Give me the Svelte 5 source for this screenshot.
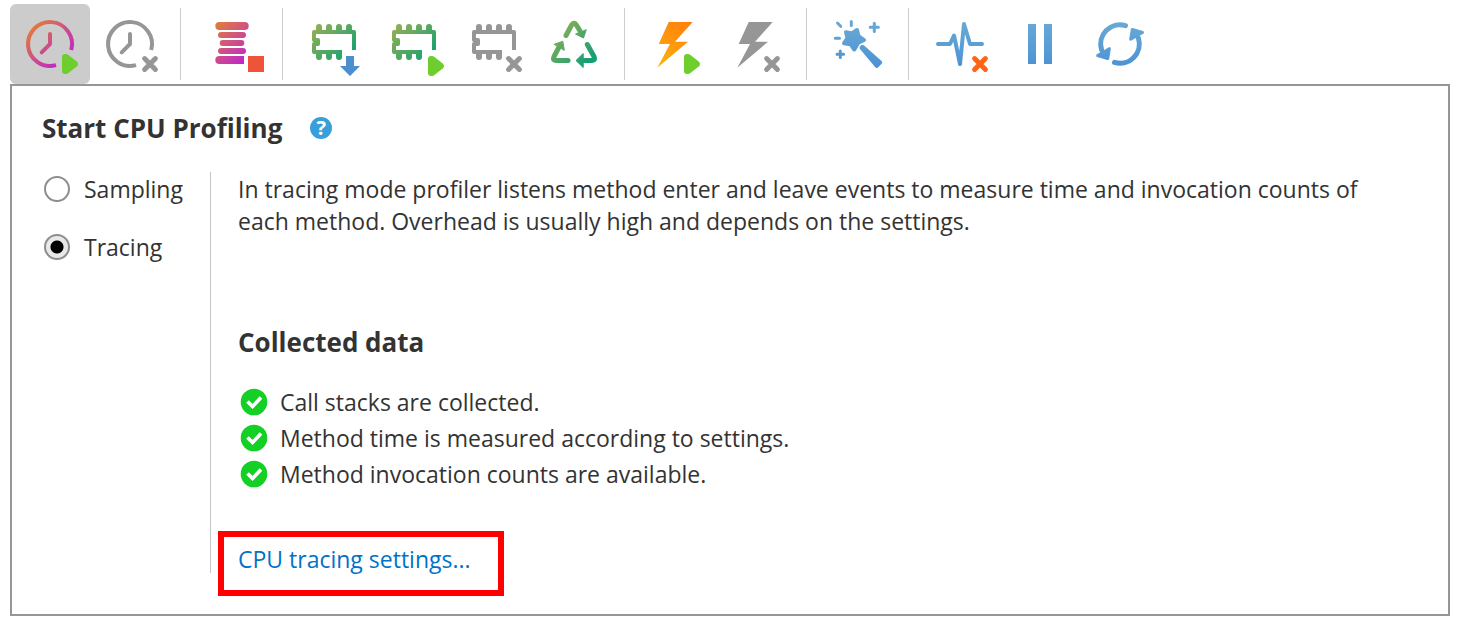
<script lang="ts">
	type Tool = { id: string; label: string; badge?: 'play' | 'cross'; bx?: number; by?: number };

	const groups: Tool[][] = [
		[
			{ id: 'clock', label: 'Start CPU profiling', badge: 'play', bx: 52, by: 50 },
			{ id: 'clock-off', label: 'Stop CPU profiling', badge: 'cross', bx: 60, by: 60 }
		],
		[{ id: 'spool', label: 'Thread profiling' }],
		[
			{ id: 'chip-save', label: 'Capture memory snapshot' },
			{ id: 'chip', label: 'Start allocation recording', badge: 'play', bx: 54, by: 52 },
			{ id: 'chip-off', label: 'Stop allocation recording', badge: 'cross', bx: 60, by: 60 },
			{ id: 'recycle', label: 'Force garbage collection' }
		],
		[
			{ id: 'bolt', label: 'Start exception profiling', badge: 'play', bx: 48, by: 50 },
			{ id: 'bolt-off', label: 'Stop exception profiling', badge: 'cross', bx: 56, by: 60 }
		],
		[{ id: 'wand', label: 'Inspections' }],
		[
			{ id: 'pulse', label: 'Clear telemetry', badge: 'cross', bx: 60, by: 60 },
			{ id: 'pause', label: 'Pause' },
			{ id: 'refresh', label: 'Refresh' }
		]
	];

	const collected = [
		'Call stacks are collected.',
		'Method time is measured according to settings.',
		'Method invocation counts are available.'
	];

	let active = $state('clock');
	let mode = $state('tracing');

	function ink(id: string) {
		if (id.endsWith('-off')) return '#969696';
		if (id === 'clock' || id === 'spool') return 'url(#warm)';
		if (id.startsWith('chip') || id === 'recycle') return 'url(#green)';
		if (id === 'bolt') return 'url(#fire)';
		return 'url(#blue)';
	}
</script>

<svg class="defs" width="0" height="0" aria-hidden="true">
	<defs>
		<linearGradient id="warm" gradientUnits="userSpaceOnUse" x1="22" y1="22" x2="56" y2="58">
			<stop offset="0" stop-color="#e07c3c" />
			<stop offset="1" stop-color="#bd22d2" />
		</linearGradient>
		<linearGradient id="green" gradientUnits="userSpaceOnUse" x1="20" y1="20" x2="56" y2="56">
			<stop offset="0" stop-color="#97b052" />
			<stop offset="1" stop-color="#149f74" />
		</linearGradient>
		<linearGradient id="fire" gradientUnits="userSpaceOnUse" x1="50" y1="18" x2="24" y2="60">
			<stop offset="0" stop-color="#ff7f0c" />
			<stop offset="1" stop-color="#ffb00d" />
		</linearGradient>
		<linearGradient id="blue" gradientUnits="userSpaceOnUse" x1="0" y1="18" x2="0" y2="62">
			<stop offset="0" stop-color="#68aad4" />
			<stop offset="1" stop-color="#4c93d6" />
		</linearGradient>
	</defs>
</svg>

{#snippet icon(tool: Tool)}
	{@const color = ink(tool.id)}
	<svg viewBox="0 0 80 80" fill="none" aria-hidden="true">
		{#if tool.id.startsWith('clock')}
			<g stroke={color} stroke-width="4">
				<path d="M61.2 46A22 22 0 1 0 46 61.2" />
				<path d="M40 30V40L31.7 48.3" stroke-linecap="round" stroke-linejoin="round" />
			</g>
		{:else if tool.id === 'spool'}
			<g fill={color}>
				<rect x="23.3" y="18" width="33.4" height="8" rx="4" />
				<rect x="26" y="28" width="28" height="6" rx="3" />
				<rect x="27.7" y="36" width="24.6" height="6" rx="3" />
				<rect x="26" y="44" width="28" height="6" rx="3" />
				<path d="M27.3 52H52V60H27.3A4 4 0 0 1 27.3 52Z" />
			</g>
			<rect x="56" y="52" width="16" height="16" fill="#ec5539" />
		{:else if tool.id.startsWith('chip')}
			<g stroke={color} stroke-linejoin="round">
				<path d="M60 46V28H20V36H24V40H20V48H48" stroke-width="4" />
				<path
					d="M25 27V23M35 27V23M45 27V23M55 27V23M25 49V53M35 49V53M45 49V53"
					stroke-width="6"
					stroke-linecap="round"
				/>
			</g>
			{#if tool.id === 'chip-save'}
				<path d="M52 52H60V62H66L56 72L46 62H52Z" fill="#4a8fd0" />
			{/if}
		{:else if tool.id === 'recycle'}
			<g stroke={color} stroke-width="5" stroke-linecap="round" stroke-linejoin="round">
				<path d="M32 31.5L37.3 21.5Q40 17 42.7 21.5L46 27" />
				<path d="M53.3 40.5L60 52.5Q62 56.5 58 56.5H49" />
				<path d="M34 56.5H22Q18 56.5 20 52.5L24.5 44" />
			</g>
			<g fill={color} stroke={color} stroke-linejoin="round">
				<path d="M52.3 25.7L49.5 34L41.5 30Z" />
				<path d="M42 56.5L49.2 49.5V63.5Z" />
				<path d="M20 40.3L28.8 37.3L30.3 46.3Z" />
			</g>
		{:else if tool.id.startsWith('bolt')}
			<path d="M32.7 18H56.7L39 37.8H52L21.3 63.7L34 40H22.7Z" fill={color} />
		{:else if tool.id === 'wand'}
			<g stroke={color} stroke-linecap="round" stroke-linejoin="round">
				<path
					d="M39 26L40.5 32L46 36L40.3 38.7L36.3 45.5L32.7 40.3L26 39.3L29.5 34L28 28.3L34 29.5Z"
					fill={color}
					stroke-width="4"
				/>
				<path d="M44 43L43.5 43.8L58.8 62L62.2 58.4L44.8 43Z" fill={color} stroke-width="4" />
				<path
					d="M19.5 19L22.7 22.3M33.3 17.5V21.5M17.3 34.3H21.5M56.3 19.2V27.4M52.2 23.3H60.4M22.3 47V53.6M19 50.3H25.6"
					stroke-width="3"
				/>
			</g>
		{:else if tool.id === 'pulse'}
			<path
				d="M18 40H30L34 31.5L40 60L44 20L50 40H62"
				stroke={color}
				stroke-width="4"
				stroke-linecap="round"
				stroke-linejoin="round"
			/>
		{:else if tool.id === 'pause'}
			<path d="M28 20H36V60H28ZM44 20H52V60H44Z" fill={color} />
		{:else if tool.id === 'refresh'}
			<g stroke={color} stroke-width="5" stroke-linecap="round">
				<path d="M45.5 21.6A19.3 19.3 0 0 0 21.6 46" />
				<path d="M34.5 58.4A19.3 19.3 0 0 0 58.4 34" />
			</g>
			<g fill={color} stroke={color} stroke-width="3" stroke-linejoin="round">
				<path d="M52.3 25.5L62.5 28.5L50.7 35.3Z" />
				<path d="M17.7 51.6L29.3 44.7L27.7 54.5Z" />
			</g>
		{/if}

		{#if tool.badge === 'play'}
			<g transform="translate({tool.bx} {tool.by})">
				<path d="M0 3Q0 0 3 0H4.5L6.2 .8L15 7.7Q17 10 15 12.3L6.2 19.2L4.5 20H3Q0 20 0 17Z" fill="#6dce2e" />
			</g>
		{:else if tool.badge === 'cross'}
			<g transform="translate({tool.bx} {tool.by})">
				<path
					d="M-5.4 -5.4L5.4 5.4M5.4 -5.4L-5.4 5.4"
					stroke={tool.id === 'pulse' ? '#ff6414' : '#969696'}
					stroke-width="5"
					stroke-linecap="round"
				/>
			</g>
		{/if}
	</svg>
{/snippet}

<div class="profiler">
	<div class="toolbar" role="toolbar" aria-label="Profiler">
		{#each groups as group, i (i)}
			<div class="group">
				{#each group as tool (tool.id)}
					<button
						type="button"
						class:active={active === tool.id}
						aria-label={tool.label}
						onclick={() => (active = tool.id)}
					>
						{@render icon(tool)}
					</button>
				{/each}
			</div>
		{/each}
	</div>

	<main class="panel">
		<header>
			<h1>Start CPU Profiling</h1>
			<button type="button" class="help" aria-label="Help">?</button>
		</header>

		<div class="body">
			<div class="modes" role="radiogroup" aria-label="Profiling mode">
				<label><input type="radio" name="mode" value="sampling" bind:group={mode} />Sampling</label>
				<label><input type="radio" name="mode" value="tracing" bind:group={mode} />Tracing</label>
			</div>

			<section class="details">
				<p>
					In tracing mode profiler listens method enter and leave events to measure time and
					invocation counts of each method. Overhead is usually high and depends on the settings.
				</p>
				<h2>Collected data</h2>
				<ul>
					{#each collected as item (item)}
						<li>
							<svg viewBox="0 0 28 28" width="28" height="28" aria-hidden="true">
								<circle cx="14" cy="14" r="13.3" fill="#14d024" />
								<path d="M7.5 13.5L12.5 18.5L21 9.5" fill="none" stroke="#fff" stroke-width="3.6" />
							</svg>
							{item}
						</li>
					{/each}
				</ul>
				<a href="#settings">CPU tracing settings...</a>
			</section>
		</div>
	</main>
</div>

<style>
	:global(body) {
		background: #fff;
	}

	.defs {
		position: absolute;
	}

	.profiler {
		padding: 4px 10px;
		color: #333;
		font: 23px/32px 'Open Sans', 'Noto Sans', sans-serif;
	}

	.toolbar,
	.group {
		display: flex;
	}

	.group + .group::before {
		content: '';
		width: 1px;
		margin: 4px 11px 4px 10px;
		background: #cdcdcd;
	}

	.toolbar button {
		width: 80px;
		height: 80px;
		padding: 0;
		border: 0;
		border-radius: 6px;
		background: none;
	}

	.toolbar button.active {
		background: #ccc;
	}

	.toolbar svg {
		display: block;
		width: 80px;
		height: 80px;
	}

	.panel {
		padding: 26px 30px 41px;
		border: 2px solid #969696;
	}

	header {
		display: flex;
		align-items: center;
		gap: 28px;
	}

	h1,
	h2 {
		margin: 0;
		font-size: 26px;
		line-height: 32px;
		font-weight: 700;
	}

	.help {
		width: 22px;
		height: 22px;
		padding: 0;
		border: 0;
		border-radius: 50%;
		background: #389fda;
		color: #fff;
		font: 700 20px/22px 'Open Sans', sans-serif;
	}

	.body {
		display: flex;
		margin-top: 28px;
	}

	.modes {
		display: flex;
		flex: 0 0 168px;
		flex-direction: column;
		gap: 26px;
		padding-top: 1px;
		box-sizing: border-box;
	}

	label {
		display: flex;
		align-items: center;
		gap: 14px;
	}

	input {
		appearance: none;
		width: 26px;
		height: 26px;
		margin: 0 0 0 2px;
		border: 2px solid #8e8e8e;
		border-radius: 50%;
		background: #fff;
	}

	input:checked {
		background: radial-gradient(circle, #000 6px, #e9e9e9 7px);
	}

	.details {
		flex: 1;
		padding: 1px 60px 0 27px;
		border-left: 1px solid #c4c4c4;
	}

	p {
		margin: 0 0 89px;
	}

	ul {
		margin: 26px 0 53px;
		padding: 0;
		list-style: none;
	}

	li {
		display: flex;
		align-items: center;
		gap: 12px;
		padding-left: 2px;
		line-height: 36px;
	}

	a {
		position: relative;
		display: block;
		width: fit-content;
		color: #0072c9;
		line-height: 28px;
		text-decoration: none;
	}

	/* callout frame around the settings link */
	a::after {
		content: '';
		position: absolute;
		inset: -14px -33px -23px -20px;
		border: 6px solid #f00;
	}
</style>
